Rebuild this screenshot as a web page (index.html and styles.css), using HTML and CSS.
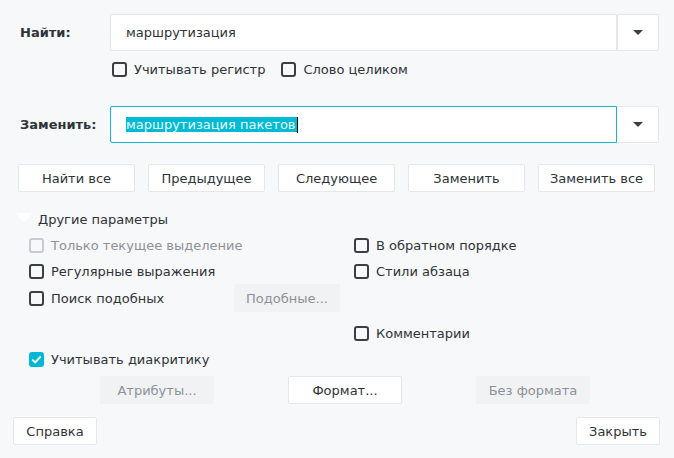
FILE: index.html
```html
<!DOCTYPE html>
<html lang="ru">
<head>
<meta charset="utf-8">
<title>Найти и заменить</title>
<link rel="stylesheet" href="styles.css">
</head>
<body>
<div class="dialog">
  <div class="field-row find-row">
    <label class="field-label">Найти:</label>
    <div class="combo">
      <div class="combo-input">маршрутизация</div>
      <div class="combo-btn"><span class="arrow"></span></div>
    </div>
  </div>
  <div class="find-opts">
    <div class="check"><span class="box"></span><span>Учитывать регистр</span></div>
    <div class="check"><span class="box"></span><span>Слово целиком</span></div>
  </div>
  <div class="field-row replace-row">
    <label class="field-label">Заменить:</label>
    <div class="combo">
      <div class="combo-input focused"><span class="sel">маршрутизация пакетов</span><span class="caret"></span></div>
      <div class="combo-btn"><span class="arrow"></span></div>
    </div>
  </div>
  <div class="action-row">
    <button class="btn wide">Найти все</button>
    <button class="btn wide">Предыдущее</button>
    <button class="btn wide">Следующее</button>
    <button class="btn wide">Заменить</button>
    <button class="btn wide">Заменить все</button>
  </div>
  <div class="expander"><span class="exp-arrow"></span><span>Другие параметры</span></div>
  <div class="options">
    <div class="opt-row">
      <div class="check disabled"><span class="box"></span><span>Только текущее выделение</span></div>
      <div class="check right"><span class="box"></span><span>В обратном порядке</span></div>
    </div>
    <div class="opt-row">
      <div class="check"><span class="box"></span><span>Регулярные выражения</span></div>
      <div class="check right"><span class="box"></span><span>Стили абзаца</span></div>
    </div>
    <div class="opt-row tall">
      <div class="check similar"><span class="box"></span><span>Поиск подобных</span></div>
      <button class="btn disabled similar-btn">Подобные...</button>
    </div>
    <div class="opt-row">
      <div class="spacer"></div>
      <div class="check right"><span class="box"></span><span>Комментарии</span></div>
    </div>
    <div class="opt-row">
      <div class="check checked"><span class="box"><svg viewBox="0 0 16 16" width="15" height="15"><path d="M3.5 8.2 L6.6 11.2 L12.5 4.8" fill="none" stroke="#fff" stroke-width="2"/></svg></span><span>Учитывать диакритику</span></div>
    </div>
  </div>
  <div class="attr-row">
    <button class="btn mid disabled">Атрибуты...</button>
    <button class="btn mid">Формат...</button>
    <button class="btn mid disabled">Без формата</button>
  </div>
  <div class="bottom-row">
    <button class="btn small">Справка</button>
    <button class="btn small">Закрыть</button>
  </div>
</div>
</body>
</html>
```
FILE: styles.css
```css
* { box-sizing: border-box; }
html, body {
  margin: 0;
  padding: 0;
  background: #f7f8fa;
}
body {
  font-family: "DejaVu Sans", "Noto Sans", sans-serif;
  font-size: 13px;
  color: #2e3338;
}
.dialog {
  width: 674px;
  height: 458px;
  padding: 14px 0 0 0;
}
.field-row {
  display: flex;
  align-items: center;
  height: 37px;
  padding-left: 20px;
  padding-right: 15px;
}
.field-label {
  width: 90px;
  font-weight: bold;
  color: #2e3338;
}
.combo {
  flex: 1;
  display: flex;
  height: 37px;
}
.combo-input {
  flex: 1;
  background: #fff;
  border: 1px solid #e6e7e9;
  border-radius: 2px 0 0 2px;
  display: flex;
  align-items: center;
  padding-left: 15px;
  color: #2e3338;
}
.combo-input.focused {
  border-color: #13b7cf;
}
.sel {
  background: #00bad3;
  color: #e9fbfd;
  line-height: 15px;
  padding-right: 1px;
}
.caret {
  width: 1px;
  height: 16px;
  background: #000;
}
.combo-btn {
  width: 42px;
  background: #fff;
  border: 1px solid #e6e7e9;
  border-left: none;
  border-radius: 0 2px 2px 0;
  display: flex;
  align-items: center;
  justify-content: center;
}
.combo-input + .combo-btn { border-left: 1px solid #e6e7e9; }
.combo-input.focused + .combo-btn { border-left: none; }
.arrow {
  width: 0;
  height: 0;
  border-left: 5px solid transparent;
  border-right: 5px solid transparent;
  border-top: 5px solid #3c4045;
}
.find-opts {
  display: flex;
  gap: 16px;
  padding-left: 112px;
  margin-top: 11px;
  height: 15px;
  align-items: center;
}
.replace-row { margin-top: 29px; }
.check {
  display: flex;
  align-items: center;
  gap: 7px;
  white-space: nowrap;
}
.box {
  width: 15px;
  height: 15px;
  border: 2px solid #3a3f45;
  border-radius: 3px;
  flex: none;
  display: flex;
  align-items: center;
  justify-content: center;
}
.check.disabled { color: #8d9196; }
.check.disabled .box { border-color: #c8cacd; }
.check.checked .box {
  background: #00b8d4;
  border-color: #00b8d4;
  border-width: 0;
}
.action-row {
  display: flex;
  gap: 13px;
  padding-left: 18px;
  margin-top: 21px;
}
.btn {
  font-family: inherit;
  font-size: 13px;
  color: #2e3338;
  background: #fff;
  border: 1px solid #e6e7e9;
  border-radius: 2px;
  height: 28px;
  padding: 0;
  text-align: center;
}
.btn.wide { width: 117px; }
.btn.mid { width: 114px; }
.btn.small { width: 84px; }
.btn.disabled {
  background: #f1f2f4;
  border-color: #f1f2f4;
  color: #8d9196;
}
.expander {
  display: flex;
  align-items: center;
  gap: 5px;
  padding-left: 15px;
  margin-top: 18px;
  height: 18px;
}
.exp-arrow {
  width: 0;
  height: 0;
  border-left: 9px solid transparent;
  border-right: 9px solid transparent;
  border-top: 9px solid #ffffff;
  margin-top: -3px;
}
.options {
  padding-left: 29px;
  margin-top: 4px;
}
.opt-row {
  display: flex;
  align-items: center;
  height: 26px;
}
.opt-row > :first-child { width: 325px; }
.opt-row.tall { height: 28px; margin-bottom: 8px; }
.opt-row.tall > .similar { width: 205px; }
.similar-btn { width: 106px; }
.attr-row {
  display: flex;
  gap: 74px;
  padding-left: 100px;
  margin-top: 4px;
}
.bottom-row {
  display: flex;
  justify-content: space-between;
  padding-left: 13px;
  padding-right: 14px;
  margin-top: 13px;
}
```
